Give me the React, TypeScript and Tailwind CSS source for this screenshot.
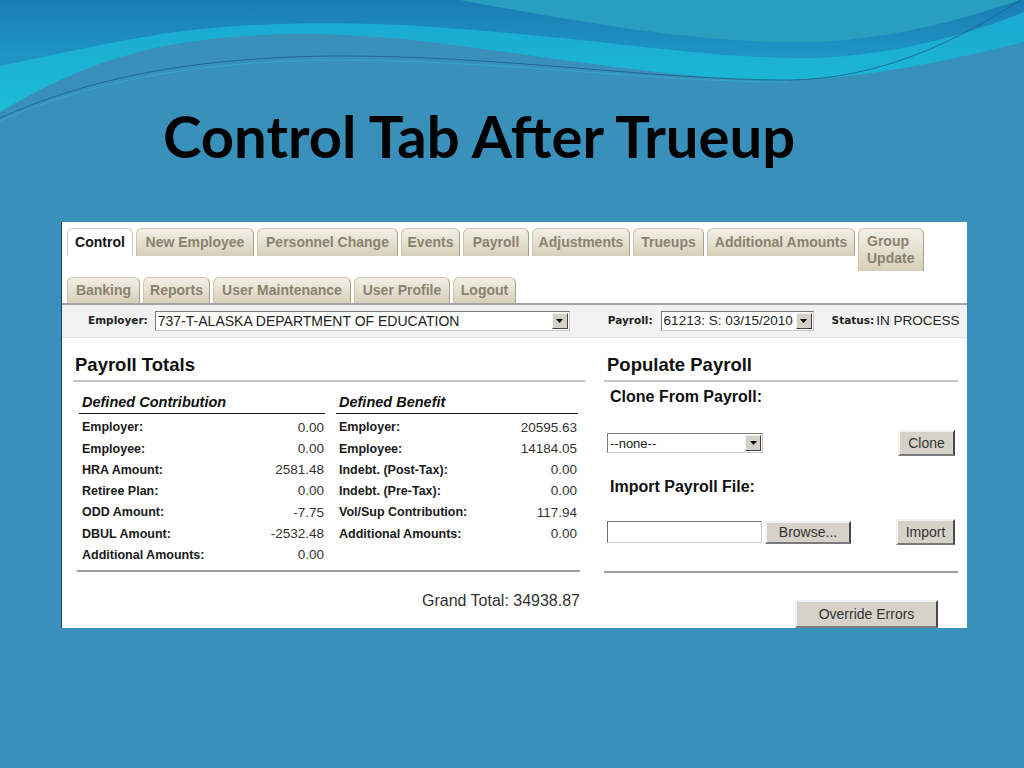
import React from 'react';

const rowTabs1 = [
  { label: 'Control', w: 'w-[66px]', active: true },
  { label: 'New Employee', w: 'w-[118px]' },
  { label: 'Personnel Change', w: 'w-[141px]' },
  { label: 'Events', w: 'w-[59px]' },
  { label: 'Payroll', w: 'w-[66px]' },
  { label: 'Adjustments', w: 'w-[98px]' },
  { label: 'Trueups', w: 'w-[71px]' },
  { label: 'Additional Amounts', w: 'w-[148px]' },
];

const rowTabs2 = [
  { label: 'Banking', w: 'w-[73px]' },
  { label: 'Reports', w: 'w-[67px]' },
  { label: 'User Maintenance', w: 'w-[138px]' },
  { label: 'User Profile', w: 'w-[96px]' },
  { label: 'Logout', w: 'w-[63px]' },
];

const contribution = [
  ['Employer:', '0.00'],
  ['Employee:', '0.00'],
  ['HRA Amount:', '2581.48'],
  ['Retiree Plan:', '0.00'],
  ['ODD Amount:', '-7.75'],
  ['DBUL Amount:', '-2532.48'],
  ['Additional Amounts:', '0.00'],
];

const benefit = [
  ['Employer:', '20595.63'],
  ['Employee:', '14184.05'],
  ['Indebt. (Post-Tax):', '0.00'],
  ['Indebt. (Pre-Tax):', '0.00'],
  ['Vol/Sup Contribution:', '117.94'],
  ['Additional Amounts:', '0.00'],
];

const Tab: React.FC<{ label: string; w: string; h: string; active?: boolean }> = ({ label, w, h, active }) => (
  <div
    className={`${w} ${h} shrink-0 flex items-center justify-center rounded-t-[6px] border border-b-0 text-[14px] font-bold whitespace-nowrap ${
      active
        ? 'bg-white border-[#c9c9c9] text-[#111]'
        : 'bg-linear-to-b from-[#f3f0e6] to-[#d6cfb8] border-[#cdc5ad] border-r-[#a9a08a] text-[#8a8270]'
    }`}
  >
    {label}
  </div>
);

const Arrow: React.FC = () => (
  <span className="w-[16px] h-[16px] mr-[1px] shrink-0 flex items-center justify-center bg-[#d4d0c8] border border-t-[#f4f4f4] border-l-[#f4f4f4] border-r-[#404040] border-b-[#404040]">
    <svg width="7" height="4" viewBox="0 0 7 4">
      <path d="M0 0 H7 L3.5 4 Z" fill="#000" />
    </svg>
  </span>
);

const Select: React.FC<{ w: string; text: string; size?: string }> = ({ w, text, size = 'text-[14px]' }) => (
  <div className={`${w} h-[20px] flex items-center bg-white border border-[#7a7a7a] border-r-[#c8c8c8] border-b-[#c8c8c8]`}>
    <span className={`flex-1 pl-[2px] ${size} leading-none text-[#222] whitespace-nowrap overflow-hidden`}>{text}</span>
    <Arrow />
  </div>
);

const Button: React.FC<{ w: string; h: string; label: string }> = ({ w, h, label }) => (
  <div
    className={`${w} ${h} shrink-0 flex items-center justify-center bg-[#d6d2ca] border-2 border-t-[#f2f2f2] border-l-[#f2f2f2] border-r-[#4a4a4a] border-b-[#7a7a7a] text-[14px] text-[#333]`}
  >
    {label}
  </div>
);

const Column: React.FC<{ title: string; rows: string[][]; w: string }> = ({ title, rows, w }) => (
  <div className={`${w} shrink-0 flex flex-col`}>
    <div className="h-[22px] flex items-center pl-[3px] border-b-[1.5px] border-[#111] text-[14.5px] font-bold italic text-[#111]">
      {title}
    </div>
    <div className="pt-[3px]">
      {rows.map(([label, value], i) => (
        <div key={i} className="h-[21.3px] flex items-center justify-between pl-[3px] pr-[1px]">
          <span className="text-[12.5px] font-bold text-[#1a1a1a]">{label}</span>
          <span className="text-[13.5px] text-[#333]">{value}</span>
        </div>
      ))}
    </div>
  </div>
);

const Wave: React.FC = () => (
  <svg className="absolute top-0 left-0" width="1024" height="130" viewBox="0 0 1024 130">
    <defs>
      <linearGradient id="topGrad" x1="0" y1="0" x2="0" y2="1">
        <stop offset="0" stopColor="#1a7db4" />
        <stop offset="1" stopColor="#1f98c7" />
      </linearGradient>
      <linearGradient id="cyanGrad" x1="0" y1="0" x2="0" y2="1">
        <stop offset="0" stopColor="#1ca6d0" />
        <stop offset="1" stopColor="#1bbcd6" />
      </linearGradient>
    </defs>
    <path
      d="M0 0 H1024 V42 C950 60 870 78 790 80 C690 82 560 58 430 42 C330 30 240 32 170 45 C100 58 45 85 0 112 Z"
      fill="url(#cyanGrad)"
    />
    <path
      d="M0 0 H1024 V12 C960 38 880 58 800 58 C700 58 600 38 420 26 C320 20 220 24 150 36 C90 46 40 58 0 66 Z"
      fill="url(#topGrad)"
    />
    <path d="M460 0 H1020 C960 20 890 40 810 42 C720 44 620 30 460 0 Z" fill="#2a9ebf" />
    <path
      d="M0 118 C80 82 180 58 330 56 C500 55 650 80 790 80 C880 79 960 40 1020 0"
      fill="none"
      stroke="#18608c"
      strokeWidth="1"
      opacity="0.8"
    />
    <path
      d="M0 121 C80 86 180 62 330 60 C500 60 650 82 790 82"
      fill="none"
      stroke="#3cc8dc"
      strokeWidth="0.8"
      opacity="0.5"
    />
  </svg>
);

export default function App() {
  return (
    <div className="w-[1024px] h-[768px] bg-[#3990ba] relative overflow-hidden">
      <Wave />
      <div className="relative flex flex-col">
        <h1 className="pt-[104px] pl-[163px] h-[172px] text-[58px] leading-[64px] font-bold text-black font-['Lato','Open_Sans',sans-serif]">
          Control Tab After Trueup
        </h1>
        <div className="ml-[61px] mt-[50px] w-[906px] h-[406px] bg-white overflow-hidden border-l border-[#1c3f6c] flex flex-col font-['Liberation_Sans',Arial,sans-serif]">
          {/* tabs */}
          <div className="pt-[6px] pl-[5px] flex flex-col gap-[6px]">
            <div className="flex items-start gap-[3px]">
              {rowTabs1.map((t) => (
                <Tab key={t.label} {...t} h="h-[28px]" />
              ))}
              <div className="w-[66px] h-[43px] shrink-0 flex flex-col justify-center pl-[8px] rounded-t-[6px] border border-b-0 bg-linear-to-b from-[#f3f0e6] to-[#d6cfb8] border-[#cdc5ad] border-r-[#a9a08a] text-[14px] leading-[17px] font-bold text-[#8a8270]">
                <span>Group</span>
                <span>Update</span>
              </div>
            </div>
            <div className="flex items-start gap-[3px]">
              {rowTabs2.map((t) => (
                <Tab key={t.label} {...t} h="h-[26px]" />
              ))}
            </div>
          </div>
          <div className="h-[2px] bg-[#a3a3a3] shrink-0" />

          {/* filter band */}
          <div className="h-[33px] shrink-0 flex items-center bg-[#f2f2f2] border-b border-[#e2e2e2] pl-[26px]">
            <span className="text-[10.5px] font-bold text-[#222] font-['DejaVu_Sans',Verdana,sans-serif]">Employer:</span>
            <div className="ml-[7px]">
              <Select w="w-[415px]" text="737-T-ALASKA DEPARTMENT OF EDUCATION" />
            </div>
            <span className="ml-[38px] text-[10.5px] font-bold text-[#222] font-['DejaVu_Sans',Verdana,sans-serif]">Payroll:</span>
            <div className="ml-[8px]">
              <Select w="w-[153px]" text="61213: S: 03/15/2010" size="text-[13.5px]" />
            </div>
            <span className="ml-[18px] text-[10.5px] font-bold text-[#222] font-['DejaVu_Sans',Verdana,sans-serif]">Status:</span>
            <span className="ml-[2px] text-[13.5px] text-[#222] whitespace-nowrap">IN PROCESS</span>
          </div>

          {/* body */}
          <div className="flex pl-[11px] gap-[19px]">
            {/* payroll totals */}
            <div className="w-[512px] shrink-0 flex flex-col">
              <div className="mt-[16px] h-[22px] flex items-center pl-[2px] text-[18.5px] font-bold text-[#111]">Payroll Totals</div>
              <div className="mt-[4px] h-[2px] bg-[#c4c4c4]" />
              <div className="mt-[10px] pl-[6px] flex gap-[11px]">
                <Column title="Defined Contribution" rows={contribution} w="w-[246px]" />
                <Column title="Defined Benefit" rows={benefit} w="w-[242px]" />
              </div>
              <div className="mt-[4px] ml-[4px] w-[503px] h-[2px] bg-[#a0a0a0]" />
              <div className="mt-[19px] w-[507px] h-[20px] flex items-center justify-end text-[16px] text-[#333]">
                Grand Total: 34938.87
              </div>
            </div>

            {/* populate payroll */}
            <div className="w-[354px] shrink-0 flex flex-col">
              <div className="mt-[16px] h-[22px] flex items-center pl-[3px] text-[18.5px] font-bold text-[#111]">Populate Payroll</div>
              <div className="mt-[4px] h-[2px] bg-[#c4c4c4]" />
              <div className="mt-[5px] h-[20px] flex items-center pl-[6px] text-[16px] font-bold text-[#111]">Clone From Payroll:</div>
              <div className="mt-[23px] h-[26px] flex items-center justify-between pl-[3px] pr-[3px]">
                <Select w="w-[156px]" text="--none--" size="text-[13px]" />
                <Button w="w-[57px]" h="h-[26px]" label="Clone" />
              </div>
              <div className="mt-[21px] h-[20px] flex items-center pl-[6px] text-[16px] font-bold text-[#111]">Import Payroll File:</div>
              <div className="mt-[22px] h-[26px] flex items-center pl-[3px] pr-[3px]">
                <div className="w-[155px] h-[22px] bg-white border border-[#6f6f6f] border-r-[#cfcfcf] border-b-[#cfcfcf]" />
                <div className="ml-[3px]">
                  <Button w="w-[86px]" h="h-[23px]" label="Browse..." />
                </div>
                <div className="ml-auto">
                  <Button w="w-[59px]" h="h-[26px]" label="Import" />
                </div>
              </div>
              <div className="mt-[26px] h-[2px] bg-[#a0a0a0]" />
              <div className="mt-[27px] ml-[191px]">
                <Button w="w-[143px]" h="h-[28px]" label="Override Errors" />
              </div>
            </div>
          </div>
        </div>
      </div>
    </div>
  );
}
